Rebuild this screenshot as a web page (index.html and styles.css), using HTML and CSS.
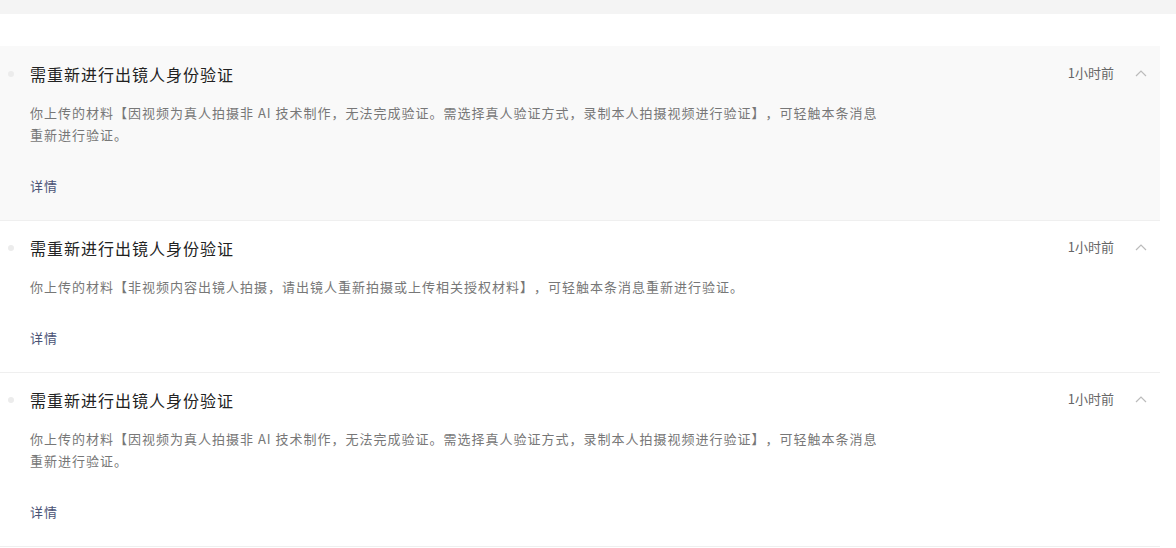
FILE: index.html
```html
<!DOCTYPE html>
<html lang="zh-CN">
<head>
    <meta charset="UTF-8">
    <title>消息通知</title>
    <link rel="stylesheet" href="styles.css">
</head>
<body>
    <div class="topbar"></div>
    <div class="list">
        <div class="msg active">
            <span class="dot"></span>
            <div class="msg-body">
                <div class="msg-head">
                    <h3 class="title">需重新进行出镜人身份验证</h3>
                    <span class="time">1小时前</span>
                    <svg class="arrow" width="12" height="8" viewBox="0 0 12 8"><path d="M1 7 L6 2 L11 7" fill="none" stroke="#bbb" stroke-width="1.2"/></svg>
                </div>
                <p class="desc">你上传的材料【因视频为真人拍摄非 AI 技术制作，无法完成验证。需选择真人验证方式，录制本人拍摄视频进行验证】，可轻触本条消息重新进行验证。</p>
                <a class="more" href="#">详情</a>
            </div>
        </div>
        <div class="msg">
            <span class="dot"></span>
            <div class="msg-body">
                <div class="msg-head">
                    <h3 class="title">需重新进行出镜人身份验证</h3>
                    <span class="time">1小时前</span>
                    <svg class="arrow" width="12" height="8" viewBox="0 0 12 8"><path d="M1 7 L6 2 L11 7" fill="none" stroke="#bbb" stroke-width="1.2"/></svg>
                </div>
                <p class="desc">你上传的材料【非视频内容出镜人拍摄，请出镜人重新拍摄或上传相关授权材料】，可轻触本条消息重新进行验证。</p>
                <a class="more" href="#">详情</a>
            </div>
        </div>
        <div class="msg">
            <span class="dot"></span>
            <div class="msg-body">
                <div class="msg-head">
                    <h3 class="title">需重新进行出镜人身份验证</h3>
                    <span class="time">1小时前</span>
                    <svg class="arrow" width="12" height="8" viewBox="0 0 12 8"><path d="M1 7 L6 2 L11 7" fill="none" stroke="#bbb" stroke-width="1.2"/></svg>
                </div>
                <p class="desc">你上传的材料【因视频为真人拍摄非 AI 技术制作，无法完成验证。需选择真人验证方式，录制本人拍摄视频进行验证】，可轻触本条消息重新进行验证。</p>
                <a class="more" href="#">详情</a>
            </div>
        </div>
    </div>
</body>
</html>
```

FILE: styles.css
```css
body {
    margin: 0;
    background: #fff;
    font-family: "Noto Sans CJK SC", "Noto Sans", sans-serif;
    text-spacing-trim: space-all;
}
.topbar {
    height: 14px;
    background: #f4f4f4;
}
.list {
    margin-top: 32px;
    width: 1160px;
}
.msg {
    display: flex;
    padding: 16px 0 23px;
    border-bottom: 1px solid #efefef;
}
.msg.active {
    background: #f9f9f9;
    padding-top: 17px;
}
.dot {
    width: 6px;
    height: 6px;
    border-radius: 50%;
    background: #ececec;
    margin: 8px 16px 0 8px;
    flex-shrink: 0;
}
.msg-body {
    flex: 1;
}
.msg-head {
    display: flex;
    align-items: flex-start;
    height: 22px;
}
.title {
    flex: 1;
    margin: 0;
    font-size: 16px;
    font-weight: normal;
    letter-spacing: 1px;
    color: #222;
    line-height: 22px;
}
.time {
    margin-top: 1px;
    font-size: 13px;
    line-height: 18px;
    color: #666;
}
.arrow {
    margin: 6px 13px 0 21px;
}
.desc {
    margin: 17px 0 0;
    max-width: 856px;
    font-size: 13px;
    letter-spacing: 1px;
    line-height: 22px;
    color: #777;
}
.more {
    display: block;
    margin-top: 29px;
    font-size: 13px;
    letter-spacing: 1px;
    line-height: 22px;
    color: #4a5275;
    text-decoration: none;
}
```
